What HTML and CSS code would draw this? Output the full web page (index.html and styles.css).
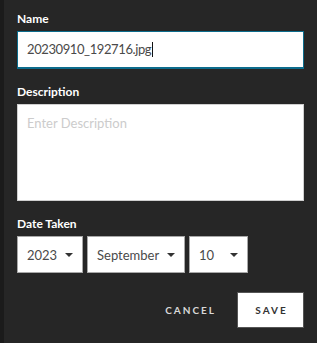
FILE: index.html
```html
<!DOCTYPE html>
<html>
  <head>
    <title>Edit Photo</title>
    <link rel="stylesheet" href="styles.css">
  </head>
  <body>
    <div class="panel">
      <div class="field">
        <label class="label">Name</label>
        <div class="text-input">20230910_192716.jpg<span class="caret"></span></div>
      </div>
      <div class="field">
        <label class="label">Description</label>
        <div class="textarea">Enter Description</div>
      </div>
      <div class="field">
        <label class="label">Date Taken</label>
        <div class="date-row">
          <div class="select year">2023<span class="arrow"></span></div>
          <div class="select month">September<span class="arrow"></span></div>
          <div class="select day">10<span class="arrow"></span></div>
        </div>
      </div>
      <div class="actions">
        <button class="btn cancel">Cancel</button>
        <button class="btn save">Save</button>
      </div>
    </div>
  </body>
</html>
```

FILE: styles.css
```css
html, body {
  margin: 0;
  height: 100%;
  background-color: #262626;
  font-family: Lato, "Open Sans", sans-serif;
}
.panel {
  box-sizing: border-box;
  height: 100%;
  border-left: 4px solid #1b1b1b;
  padding: 11px 13px 0 13px;
}
.field {
  margin-bottom: 15px;
}
.label {
  display: block;
  color: #ffffff;
  font-size: 12px;
  font-weight: bold;
  line-height: 16px;
  margin-bottom: 4px;
}
.text-input {
  box-sizing: border-box;
  height: 38px;
  background-color: #ffffff;
  border: 1px solid #0c6c8c;
  border-bottom-width: 2px;
  padding: 0 9px;
  color: #4a4a4a;
  font-size: 13px;
  letter-spacing: -0.4px;
  line-height: 35px;
  display: flex;
  align-items: center;
}
.caret {
  display: inline-block;
  width: 1px;
  height: 15px;
  background-color: #111;
  margin-left: 1px;
}
.textarea {
  box-sizing: border-box;
  height: 97px;
  background-color: #ffffff;
  border: 1px solid #cfcfcf;
  padding: 9px 9px;
  color: #cccccc;
  font-size: 13px;
  line-height: 18px;
}
.date-row {
  display: flex;
  gap: 4px;
}
.select {
  box-sizing: border-box;
  height: 37px;
  background-color: #ffffff;
  border: 1px solid #a8a8a8;
  padding: 0 9px;
  color: #4a4a4a;
  font-size: 13px;
  display: flex;
  align-items: center;
  justify-content: space-between;
}
.year {
  width: 66px;
}
.month {
  width: 98px;
}
.day {
  width: 59px;
}
.arrow {
  width: 0;
  height: 0;
  border-left: 4px solid transparent;
  border-right: 4px solid transparent;
  border-top: 4px solid #333333;
}
.actions {
  display: flex;
  justify-content: flex-end;
  align-items: center;
  gap: 21px;
  margin-top: 19px;
}
.btn {
  font-family: Lato, "Open Sans", sans-serif;
  font-size: 10px;
  font-weight: bold;
  letter-spacing: 2px;
  text-transform: uppercase;
  cursor: pointer;
}
.cancel {
  background: none;
  border: none;
  color: #d8d8d8;
  padding: 0;
}
.save {
  box-sizing: border-box;
  width: 67px;
  height: 36px;
  background-color: #ffffff;
  border: 1px solid #555555;
  color: #333333;
  padding: 0 0 0 2px;
}
```
